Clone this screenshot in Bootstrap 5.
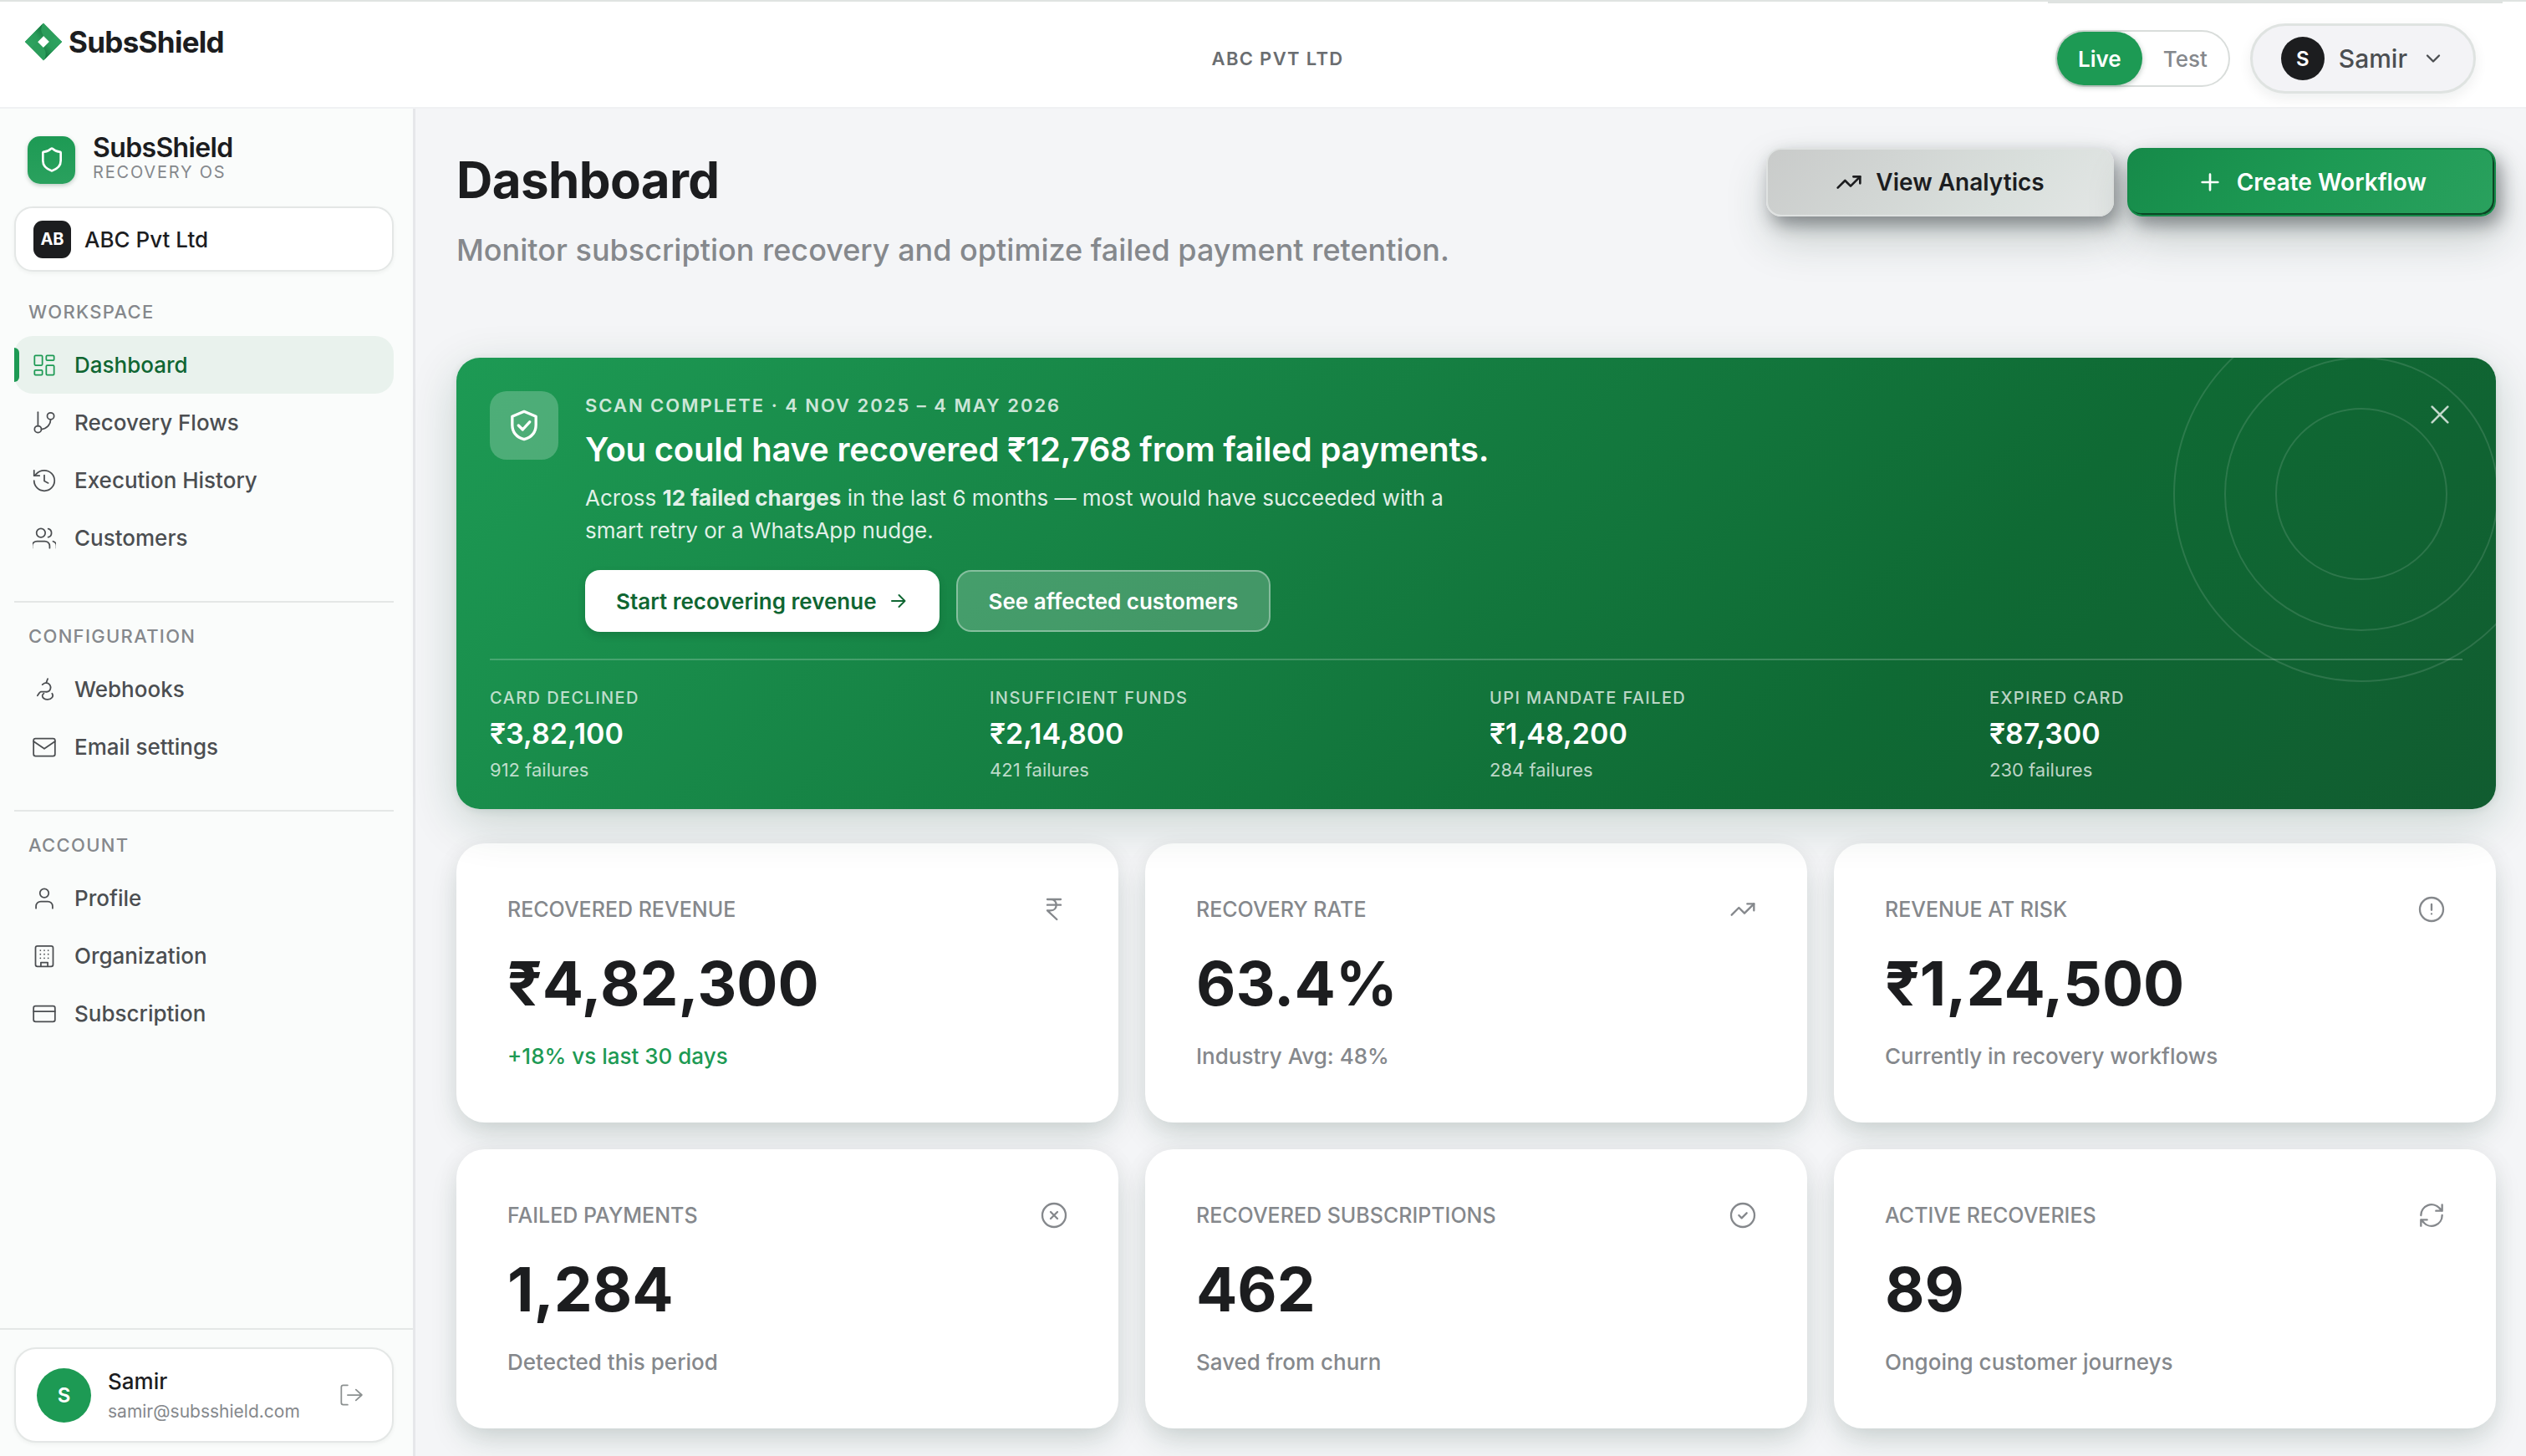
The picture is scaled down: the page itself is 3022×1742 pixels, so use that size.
<!DOCTYPE html>
<html lang="en">
<head>
<meta charset="utf-8">
<meta name="viewport" content="width=device-width, initial-scale=1">
<title>SubsShield – Dashboard</title>
<link href="https://cdn.jsdelivr.net/npm/bootstrap@5.3.0/dist/css/bootstrap.min.css" rel="stylesheet">
<style>
:root{--ink:#1c1d1f;--body:#4b4e51;--muted:#85888c;--green:#1d9a54;--green-deep:#0f6632;--line:#e4e7e6}
body{font-family:Inter,"Liberation Sans",sans-serif;background:#f4f5f7;color:var(--ink);font-size:26px;line-height:39px}
a{text-decoration:none;color:inherit}
svg{display:block;flex:none}
.ico{fill:none;stroke:currentColor;stroke-width:2;stroke-linecap:round;stroke-linejoin:round;width:28px;height:28px}
.ico-thin{stroke-width:1.5}
.ico-sm{width:24px;height:24px}
.ico-lg{width:32px;height:32px}
.ico-xl{width:40px;height:40px}
.app{min-height:100vh}

.topbar{position:relative;background:#fff;border-top:2px solid #dfe3e1;border-bottom:2px solid #f0f1f3;height:130px;padding:10px 60px 0 29px}
.topbar-edge{position:absolute;top:0;right:28px;width:544px;height:2px;background:#dfe3e1}
.topbar-side{flex:1 1 0}
.brand{font-size:35px;line-height:46px;font-weight:700;letter-spacing:-.02em;margin-bottom:40px;gap:7px}
.tenant{font-size:22px;line-height:33px;font-weight:600;letter-spacing:.06em;color:#6a6d70;padding-left:66px}
.mode-switch{border:2px solid #d9dddb;border-radius:34px;background:#fff;height:68px}
.mode-btn{border:0;background:none;border-radius:34px;padding:0 25px;font-size:26px;font-weight:500;color:var(--muted)}
.mode-btn.active{background:var(--green);color:#fff;font-weight:600;box-shadow:0 2px 6px rgba(16,60,35,.3)}
.user-btn{border:3px solid #dfe3e1;background:#f3f3f6;border-radius:42px;height:84px;padding:0 34px;gap:17px;color:var(--body);font-weight:500;font-size:30px;box-shadow:0 6px 16px rgba(20,30,25,.07)}
.round-avatar{width:52px;height:52px;border-radius:50%;background:var(--ink);color:#fff;font-size:24px;font-weight:600}

.side{width:497px;flex:none;background:#fafcfb;border-right:3px solid #e6e7ea}
.side-body{padding:32px 23px 0 17px}
.product{gap:21px}
.product-icon{width:57px;height:57px;border-radius:15px;background:linear-gradient(180deg,#1d9a54,#2aa15e);color:#fff;box-shadow:0 2px 5px rgba(16,60,35,.25)}
.product-name{font-size:32px;line-height:30px;font-weight:600;letter-spacing:-.02em}
.product-tag{font-size:20px;line-height:28px;color:var(--muted);letter-spacing:.09em}
.panel{background:#fff;border:2px solid var(--line);border-radius:22px;box-shadow:0 2px 5px rgba(20,30,25,.05)}
.org{height:78px;margin-top:27px;padding:0 21px;gap:16px;font-weight:500}
.org-mark{width:45px;height:45px;border-radius:11px;background:var(--ink);color:#fff;font-size:20px;font-weight:700}
.side-label{font-size:22px;line-height:33px;font-weight:500;letter-spacing:.06em;color:var(--muted);padding-left:17px;margin:0 0 12px}
.side-group{margin-top:32px}
.side-group + .side-group{margin-top:41px;border-top:2px solid var(--line);padding-top:24px}
.side-link{position:relative;display:flex;align-items:center;gap:22px;height:69px;padding:0 22px;border-radius:22px;font-weight:500;color:var(--body)}
.side-link.active{background:#e9f2ed;color:var(--green-deep)}
.side-link.active .ico{color:var(--green)}
.side-link.active::before{content:"";position:absolute;left:0;top:14px;bottom:14px;width:6px;border-radius:0 6px 6px 0;background:var(--green)}
.side-foot{border-top:2px solid var(--line);padding:21px 23px 16px 17px}
.account{height:114px;padding:0 35px 0 25px;gap:20px;border-radius:26px}
.account-avatar{width:65px;height:65px;border-radius:50%;background:var(--green);color:#fff;font-size:24px;font-weight:600}
.account-mail{font-size:21px;line-height:34px;color:var(--muted)}
.account-out{border:0;background:none;padding:0;color:#8b9090}

.main-area{padding:47px 36px 32px 49px;min-width:0}
.page-title{font-size:60px;line-height:76px;font-weight:700;letter-spacing:-.01em;margin:0}
.page-sub{font-size:36px;line-height:54px;font-weight:500;color:var(--muted);margin:19px 0 0}
.act{height:82px;border-radius:18px;padding:0 81px;gap:16px;font-size:28px;font-weight:600}
.act-light{background:linear-gradient(135deg,#c9cbca,#dae0dd 70%,#e3e6e5);color:var(--ink);border:2px solid #dfe2e1;box-shadow:6px 10px 20px rgba(30,35,42,.42),4px 26px 52px rgba(30,60,45,.22)}
.act-green{background:linear-gradient(135deg,#168a49,#1d9a54 50%,#2aa15e);color:#fff;border:2px solid #168a49;box-shadow:inset -2px -2px 0 #0b4524,6px 10px 20px rgba(30,35,42,.42),4px 26px 52px rgba(30,60,45,.22)}

.banner{position:relative;z-index:1;margin-top:102px;border-radius:28px;padding:40px 40px 32px;color:#fff;background:linear-gradient(135deg,#1d9a54 0%,#0f6a34 70%,#115c30 100%);box-shadow:0 16px 56px rgba(16,70,40,.19),0 2px 10px rgba(16,60,35,.1)}
.rings{position:absolute;inset:0;border-radius:28px;overflow:hidden;pointer-events:none}
.rings svg{position:absolute;right:-64px;top:-62px}
.scan-icon{width:82px;height:82px;border-radius:20px;background:rgba(255,255,255,.22)}
.eyebrow{font-size:22px;line-height:35px;font-weight:600;letter-spacing:.09em;color:rgba(255,255,255,.8);margin:0}
.headline{font-size:40px;line-height:52px;font-weight:600;letter-spacing:-.005em;margin:9px 0 12px}
.blurb{font-size:26px;line-height:39px;color:rgba(255,255,255,.88);max-width:1080px;margin:0 0 28px}
.cta{height:74px;border-radius:18px;padding:0 37px;font-size:26px;font-weight:600;gap:14px}
.cta-row{gap:20px}
.cta-solid{background:#fff;color:var(--green-deep);border:0;box-shadow:0 4px 10px rgba(10,50,28,.2)}
.cta-ghost{background:rgba(255,255,255,.2);color:#fff;border:2px solid rgba(255,255,255,.35)}
.dismiss{position:absolute;right:51px;top:52px;border:0;background:none;padding:0;color:rgba(255,255,255,.75)}
.causes{border-top:2px solid rgba(255,255,255,.2);margin-top:32px;padding-top:30px;column-gap:32px;display:grid;grid-template-columns:repeat(4,1fr)}
.cause-label{font-size:20px;line-height:30px;font-weight:500;letter-spacing:.07em;color:rgba(255,255,255,.72)}
.cause-value{font-size:34px;line-height:56px;font-weight:600}
.cause-count{font-size:22px;line-height:30px;color:rgba(255,255,255,.72)}

.metrics{display:grid;grid-template-columns:repeat(3,1fr);gap:32px;margin-top:41px}
.metric{background:#fff;border-radius:34px;height:334px;padding:61px;box-shadow:0 18px 36px -6px rgba(20,60,40,.17),0 2px 28px rgba(20,40,30,.05)}
.metric-label{font-size:25px;line-height:36px;font-weight:500;color:var(--muted);text-transform:uppercase;margin:0}
.metric-value{font-size:73px;line-height:88px;font-weight:700;margin:27px 0 23px}
.metric-note{line-height:39px;font-weight:500;color:var(--muted)}
.metric-note.note-up{color:var(--green)}
.metric .ico{color:#85888c;stroke-width:1.75}
</style>
</head>
<body>
<div class="app d-flex flex-column">
<header class="topbar d-flex align-items-center justify-content-between">
  <div class="topbar-edge"></div>
  <div class="topbar-side">
    <a href="#" class="brand d-inline-flex align-items-center">
      <svg width="46" height="46" viewBox="0 0 46 46"><defs><linearGradient id="lg1" x1="0" y1="1" x2="1" y2="0"><stop offset="0" stop-color="#2ea562"/><stop offset=".55" stop-color="#2b9d5b"/><stop offset="1" stop-color="#0d6b36"/></linearGradient><linearGradient id="lg2" x1="1" y1="0" x2="0" y2="1"><stop offset="0" stop-color="#2ea562"/><stop offset=".55" stop-color="#2b9d5b"/><stop offset="1" stop-color="#0d6b36"/></linearGradient></defs><path fill="#2b9d5b" fill-rule="evenodd" d="M23 .5 45.200 23 23 45.500.8 23zM23 16l-7 7 7 7 7-7z"/><path fill="url(#lg1)" d="M22 1.500Q18 9 23 16L9 30 .8 23z"/><path fill="url(#lg2)" d="M24 44.500Q28 37 23 30L37 16l8.200 7z"/></svg>
      <span>SubsShield</span>
    </a>
  </div>
  <div class="tenant">ABC PVT LTD</div>
  <div class="topbar-side d-flex justify-content-end align-items-center gap-4">
    <div class="mode-switch d-flex" role="group" aria-label="Mode">
      <button type="button" class="mode-btn active">Live</button>
      <button type="button" class="mode-btn">Test</button>
    </div>
    <button type="button" class="user-btn d-flex align-items-center">
      <span class="round-avatar d-flex align-items-center justify-content-center">S</span>
      <span>Samir</span>
      <svg class="ico" viewBox="0 0 24 24"><path d="m6 9 6 6 6-6"/></svg>
    </button>
  </div>
</header>
<div class="d-flex flex-grow-1">
<aside class="side d-flex flex-column">
  <div class="side-body flex-grow-1">
    <div class="product d-flex align-items-center ps-3">
      <span class="product-icon d-flex align-items-center justify-content-center"><svg class="ico ico-lg" viewBox="0 0 24 24"><path d="M20 13c0 5-3.500 7.500-7.660 8.950a1 1 0 0 1-.67-.01C7.500 20.500 4 18 4 13V6a1 1 0 0 1 1-1c2 0 4.500-1.200 6.240-2.720a1.170 1.170 0 0 1 1.520 0C14.510 3.810 17 5 19 5a1 1 0 0 1 1 1z"/></svg></span>
      <div><div class="product-name">SubsShield</div><div class="product-tag">RECOVERY OS</div></div>
    </div>
    <div class="panel org d-flex align-items-center"><span class="org-mark d-flex align-items-center justify-content-center">AB</span><span>ABC Pvt Ltd</span></div>
    <nav>
      <div class="side-group">
        <p class="side-label">WORKSPACE</p>
        <a href="#" class="side-link active"><svg class="ico ico-thin" viewBox="0 0 24 24"><rect width="8" height="10" x="2" y="2" rx="1"/><rect width="8" height="5" x="14" y="2" rx="1"/><rect width="8" height="10" x="14" y="12" rx="1"/><rect width="8" height="5" x="2" y="17" rx="1"/></svg>Dashboard</a>
        <a href="#" class="side-link"><svg class="ico ico-thin" viewBox="0 0 24 24"><path d="M5.500 1v14"/><circle cx="18.500" cy="5" r="3.500"/><circle cx="5.500" cy="18.500" r="3.500"/><path d="M18.500 8.500a10 10 0 0 1-9.500 10"/></svg>Recovery Flows</a>
        <a href="#" class="side-link"><svg class="ico ico-thin" viewBox="0 0 24 24"><path d="M1.500 12a10.500 10.500 0 1 0 10.500-10.500c-3.500 0-6.500 1.500-8.500 4L1.500 7"/><path d="M1.500 1.500v5.500h5.500"/><path d="M12 6.500v6l4 2"/></svg>Execution History</a>
        <a href="#" class="side-link"><svg class="ico ico-thin" viewBox="0 0 24 24"><path d="M17.500 22v-2a5 5 0 0 0-5-5H4.500a5 5 0 0 0-5 5v2"/><circle cx="8.500" cy="6.500" r="4.500"/><path d="M24.500 22v-2a5 5 0 0 0-3.500-4.800"/><path d="M16 2.200a4.500 4.500 0 0 1 0 8.700"/></svg>Customers</a>
      </div>
      <div class="side-group">
        <p class="side-label">CONFIGURATION</p>
        <a href="#" class="side-link"><svg class="ico ico-thin" viewBox="0 0 24 24"><path d="M15.500 1 14 5c3.500.5 5 3.500 4.300 6.200-.7 2.500-2.800 3.500-5.300 3H8.500c-1 0-1.500 1-3.500 4M10 7c1-1 2.500-2 4-2M20 16c2 3-.5 6-4.500 6.200-3 .2-5.500-1.500-5.500-3.700 0-1 .5-2 1.500-2.500"/></svg>Webhooks</a>
        <a href="#" class="side-link"><svg class="ico ico-thin" viewBox="0 0 24 24"><rect width="22" height="18" x="1" y="3" rx="2"/><path d="m1 6 11 7.500L23 6"/></svg>Email settings</a>
      </div>
      <div class="side-group">
        <p class="side-label">ACCOUNT</p>
        <a href="#" class="side-link"><svg class="ico ico-thin" viewBox="0 0 24 24"><path d="M20.500 22v-2a5 5 0 0 0-5-5h-7a5 5 0 0 0-5 5v2"/><circle cx="12" cy="6.500" r="4.500"/></svg>Profile</a>
        <a href="#" class="side-link"><svg class="ico ico-thin" viewBox="0 0 24 24"><rect width="18" height="21" x="3" y="1.500" rx="2"/><path d="M8.500 22v-3.500h7V22M8 6h.01M12 6h.01M16 6h.01M8 10h.01M12 10h.01M16 10h.01M8 14h.01M12 14h.01M16 14h.01"/></svg>Organization</a>
        <a href="#" class="side-link"><svg class="ico ico-thin" viewBox="0 0 24 24"><rect width="22" height="16" x="1" y="4" rx="2"/><path d="M1 9.500h22"/></svg>Subscription</a>
      </div>
    </nav>
  </div>
  <div class="side-foot">
    <div class="panel account d-flex align-items-center">
      <span class="account-avatar d-flex align-items-center justify-content-center">S</span>
      <div class="flex-grow-1"><div class="fw-medium">Samir</div><div class="account-mail">samir@subsshield.com</div></div>
      <button type="button" class="account-out" aria-label="Log out"><svg class="ico ico-thin" viewBox="0 0 24 24"><path d="M8.500 2H4a2 2 0 0 0-2 2v16a2 2 0 0 0 2 2h4.500M8.500 12H23M17 6.500l6 5.500-6 5.500"/></svg></button>
    </div>
  </div>
</aside>
<main class="main-area flex-grow-1">
  <div class="d-flex justify-content-between align-items-start">
    <div><h1 class="page-title">Dashboard</h1><p class="page-sub">Monitor subscription recovery and optimize failed payment retention.</p></div>
    <div class="d-flex gap-3">
      <button type="button" class="act act-light d-flex align-items-center"><svg class="ico ico-lg" viewBox="0 0 24 24"><path d="m22 7-8.500 8.500-5-5L2 17"/><path d="M16 7h6v6"/></svg>View Analytics</button>
      <button type="button" class="act act-green d-flex align-items-center"><svg class="ico ico-lg" viewBox="0 0 24 24"><path d="M5 12h14M12 5v14"/></svg>Create Workflow</button>
    </div>
  </div>
  <section class="banner">
    <div class="rings"><svg width="450" height="450" viewBox="0 0 450 450" fill="none" stroke="#fff" stroke-opacity=".12" stroke-width="2"><circle cx="225" cy="225" r="102"/><circle cx="225" cy="225" r="163"/><circle cx="225" cy="225" r="224"/></svg></div>
    <div class="d-flex align-items-start">
      <span class="scan-icon d-flex align-items-center justify-content-center"><svg class="ico ico-xl" viewBox="0 0 24 24"><path d="M12 2 20.500 5.500v6c0 5.500-3.500 9-8.500 10.500C7 20.500 3.500 17 3.500 11.500v-6z"/><path d="m8 12 3 3 5-5.500"/></svg></span>
      <div class="ms-4 ps-2">
        <p class="eyebrow">SCAN COMPLETE · 4 NOV 2025 – 4 MAY 2026</p>
        <h2 class="headline">You could have recovered ₹12,768 from failed payments.</h2>
        <p class="blurb">Across <strong>12 failed charges</strong> in the last 6 months — most would have succeeded with a smart retry or a WhatsApp nudge.</p>
        <div class="cta-row d-flex">
          <button type="button" class="cta cta-solid d-flex align-items-center">Start recovering revenue <svg class="ico ico-sm" viewBox="0 0 24 24" stroke-width="3"><path d="M4 12h15M12.500 5l7 7-7 7"/></svg></button>
          <button type="button" class="cta cta-ghost">See affected customers</button>
        </div>
      </div>
    </div>
    <div class="causes">
      <div><div class="cause-label">CARD DECLINED</div><div class="cause-value">₹3,82,100</div><div class="cause-count">912 failures</div></div>
      <div><div class="cause-label">INSUFFICIENT FUNDS</div><div class="cause-value">₹2,14,800</div><div class="cause-count">421 failures</div></div>
      <div><div class="cause-label">UPI MANDATE FAILED</div><div class="cause-value">₹1,48,200</div><div class="cause-count">284 failures</div></div>
      <div><div class="cause-label">EXPIRED CARD</div><div class="cause-value">₹87,300</div><div class="cause-count">230 failures</div></div>
    </div>
    <button type="button" class="dismiss" aria-label="Dismiss"><svg class="ico ico-lg" viewBox="0 0 24 24"><path d="M19 5 5 19M5 5l14 14"/></svg></button>
  </section>
  <section class="metrics">
    <article class="metric"><div class="d-flex justify-content-between align-items-center"><h3 class="metric-label">Recovered Revenue</h3><svg class="ico ico-lg" viewBox="0 0 24 24"><path d="M6 3h12M6 8h12M6 13l8.500 8M6 13h3M9 13c6.670 0 6.670-10 0-10"/></svg></div><div class="metric-value">₹4,82,300</div><div class="metric-note note-up">+18% vs last 30 days</div></article>
    <article class="metric"><div class="d-flex justify-content-between align-items-center"><h3 class="metric-label">Recovery Rate</h3><svg class="ico ico-lg" viewBox="0 0 24 24"><path d="m22 7-8.500 8.500-5-5L2 17"/><path d="M16 7h6v6"/></svg></div><div class="metric-value">63.4%</div><div class="metric-note">Industry Avg: 48%</div></article>
    <article class="metric"><div class="d-flex justify-content-between align-items-center"><h3 class="metric-label">Revenue at Risk</h3><svg class="ico ico-lg" viewBox="0 0 24 24"><circle cx="12" cy="12" r="10.500"/><path d="M12 7.500v5M12 16h.01"/></svg></div><div class="metric-value">₹1,24,500</div><div class="metric-note">Currently in recovery workflows</div></article>
    <article class="metric"><div class="d-flex justify-content-between align-items-center"><h3 class="metric-label">Failed Payments</h3><svg class="ico ico-lg" viewBox="0 0 24 24"><circle cx="12" cy="12" r="10.500"/><path d="m15 9-6 6M9 9l6 6"/></svg></div><div class="metric-value">1,284</div><div class="metric-note">Detected this period</div></article>
    <article class="metric"><div class="d-flex justify-content-between align-items-center"><h3 class="metric-label">Recovered Subscriptions</h3><svg class="ico ico-lg" viewBox="0 0 24 24"><circle cx="12" cy="12" r="10.500"/><path d="m8.500 12 2.500 2.500 4.500-4.500"/></svg></div><div class="metric-value">462</div><div class="metric-note">Saved from churn</div></article>
    <article class="metric"><div class="d-flex justify-content-between align-items-center"><h3 class="metric-label">Active Recoveries</h3><svg class="ico ico-lg" viewBox="0 0 24 24"><path d="M2.500 12a9.500 9.500 0 0 1 16.500-6.500L21.500 8M21.500 2.500V8H16M21.500 12a9.500 9.500 0 0 1-16.500 6.500L2.500 16M8 16H2.500v5.500"/></svg></div><div class="metric-value">89</div><div class="metric-note">Ongoing customer journeys</div></article>
  </section>
</main>
</div>
</div>
<script src="https://cdn.jsdelivr.net/npm/bootstrap@5.3.0/dist/js/bootstrap.bundle.min.js"></script>
</body>
</html>
